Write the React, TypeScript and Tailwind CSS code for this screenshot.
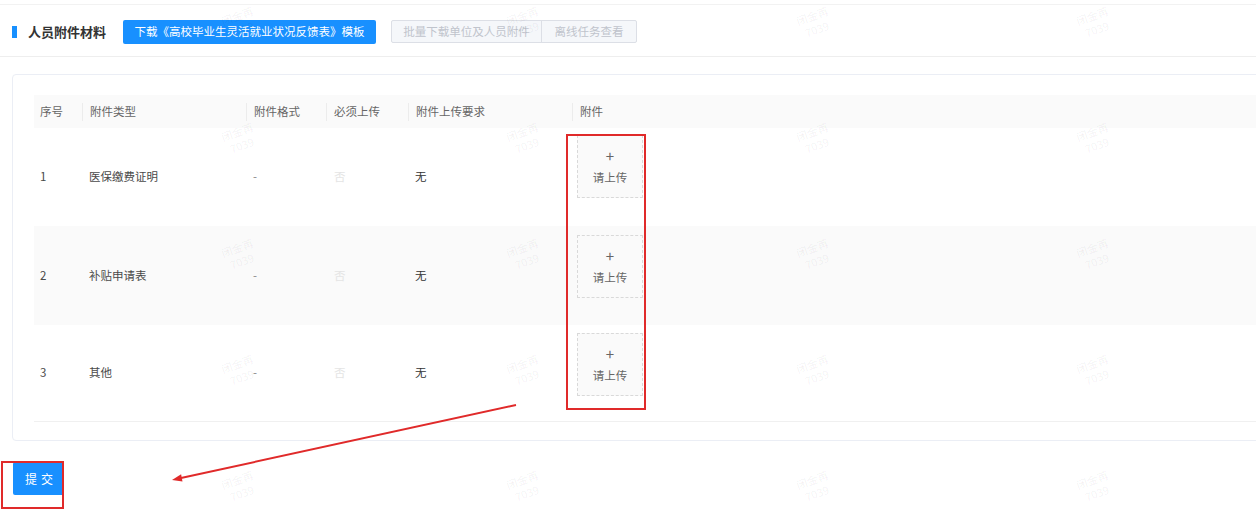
import React from "react";

const wmCols = [245, 530, 820, 1100];
const wmRows = [22, 138, 254, 370, 486];

const rows = [
  { no: "1", type: "医保缴费证明", fmt: "-", must: "否", req: "无", bg: "bg-white", h: "h-[98px]", mt: "mt-[7px]" },
  { no: "2", type: "补贴申请表", fmt: "-", must: "否", req: "无", bg: "bg-[#fafafa]", h: "h-[99px]", mt: "mt-[9px]" },
  { no: "3", type: "其他", fmt: "-", must: "否", req: "无", bg: "bg-white", h: "h-[96px]", mt: "mt-[8px]" },
];

function UploadBox({ mt }: { mt: string }) {
  return (
    <div className={`ml-[5px] ${mt} w-[66px] h-[63px] border border-dashed border-[#d9d9d9] bg-[#fafafa] flex flex-col items-center justify-center gap-[5px] text-[#666]`}>
      <span className="text-[15px] leading-[16px]">+</span>
      <span className="text-[11.5px] leading-[16px]">请上传</span>
    </div>
  );
}

export default function App() {
  return (
    <div
      className="relative w-[1256px] h-[516px] overflow-hidden bg-white"
      style={{ fontFamily: '"Noto Sans CJK SC", "Noto Sans", sans-serif' }}
    >
      <div className="h-[5px] border-b border-[#f2f2f2]" />
      {/* header */}
      <div className="h-[52px] border-b border-[#eeeeee] flex items-center pl-[12px] pt-[2px]">
        <div className="w-[5px] h-[12px] bg-[#1890ff]" />
        <div className="ml-[11px] text-[13px] font-bold text-[#333] leading-none">人员附件材料</div>
        <div className="ml-[17px] w-[253px] h-[24px] bg-[#1890ff] rounded-[2px] text-white text-[11.5px] flex items-center justify-center">
          下载《高校毕业生灵活就业状况反馈表》模板
        </div>
        <div className="ml-[15px] flex h-[23px] border border-[#dcdfe6] rounded-[2px] bg-[#f5f7fa] text-[#c0c4cc] text-[11.5px]">
          <div className="w-[150px] flex items-center justify-center border-r border-[#dcdfe6]">批量下载单位及人员附件</div>
          <div className="w-[94px] flex items-center justify-center">离线任务查看</div>
        </div>
      </div>

      {/* card */}
      <div className="mt-[17px] ml-[12px] w-[1270px] border border-[#ebeef5] rounded-[4px] pl-[21px] pt-[20px] pb-[18px]">
        <div className="text-[11.5px] border-b border-[#f0f0f0]">
          <div className="flex h-[33px] bg-[#fafafa] items-center text-[#666]">
            <div className="w-[48px] pl-[6px]">序号</div>
            <div className="w-[164px] pl-[7px] border-l border-[#ececec] h-[18px] flex items-center">附件类型</div>
            <div className="w-[80px] pl-[7px] border-l border-[#ececec] h-[18px] flex items-center">附件格式</div>
            <div className="w-[82px] pl-[7px] border-l border-[#ececec] h-[18px] flex items-center">必须上传</div>
            <div className="w-[164px] pl-[7px] border-l border-[#ececec] h-[18px] flex items-center">附件上传要求</div>
            <div className="flex-1 pl-[7px] border-l border-[#ececec] h-[18px] flex items-center">附件</div>
          </div>
          {rows.map((r) => (
            <div key={r.no} className={`flex ${r.h} ${r.bg}`}>
              <div className="w-[48px] pl-[6px] flex items-center text-[#4a4a4a]">{r.no}</div>
              <div className="w-[164px] pl-[7px] flex items-center text-[#4a4a4a]">{r.type}</div>
              <div className="w-[80px] pl-[7px] flex items-center text-[#888]">{r.fmt}</div>
              <div className="w-[82px] pl-[8px] flex items-center text-[#e4e4e4]">{r.must}</div>
              <div className="w-[164px] pl-[7px] flex items-center text-[#333]">{r.req}</div>
              <div className="flex-1 flex items-start">
                <UploadBox mt={r.mt} />
              </div>
            </div>
          ))}
        </div>
      </div>

      {/* submit */}
      <div className="mt-[21px] ml-[13px]">
        <button className="w-[51px] h-[33px] bg-[#1890ff] rounded-[2px] text-white text-[12px] tracking-[4px] pl-[5px]">
          提交
        </button>
      </div>

      {/* watermarks */}
      {wmRows.map((y) =>
        wmCols.map((x) => (
          <div
            key={`${x}-${y}`}
            className="pointer-events-none absolute flex flex-col items-center text-[11px] leading-[14px] text-[rgba(0,0,0,0.06)] -rotate-[20deg]"
            style={{ left: x - 22, top: y - 14 }}
          >
            <span>闭金苒</span>
            <span>7039</span>
          </div>
        ))
      )}

      {/* annotations */}
      <div className="pointer-events-none absolute left-[566px] top-[134px] w-[80px] h-[276px] border-2 border-[#e02a2a]" />
      <div className="pointer-events-none absolute left-[1px] top-[461px] w-[63px] h-[48px] border-2 border-[#e02a2a]" />
      <svg className="pointer-events-none absolute left-0 top-0" width="1256" height="516">
        <line x1="516" y1="405" x2="181" y2="478" stroke="#e02a2a" strokeWidth="2" />
        <polygon points="172,480 182.5,481.6 181.1,474.3" fill="#e02a2a" />
      </svg>
    </div>
  );
}
